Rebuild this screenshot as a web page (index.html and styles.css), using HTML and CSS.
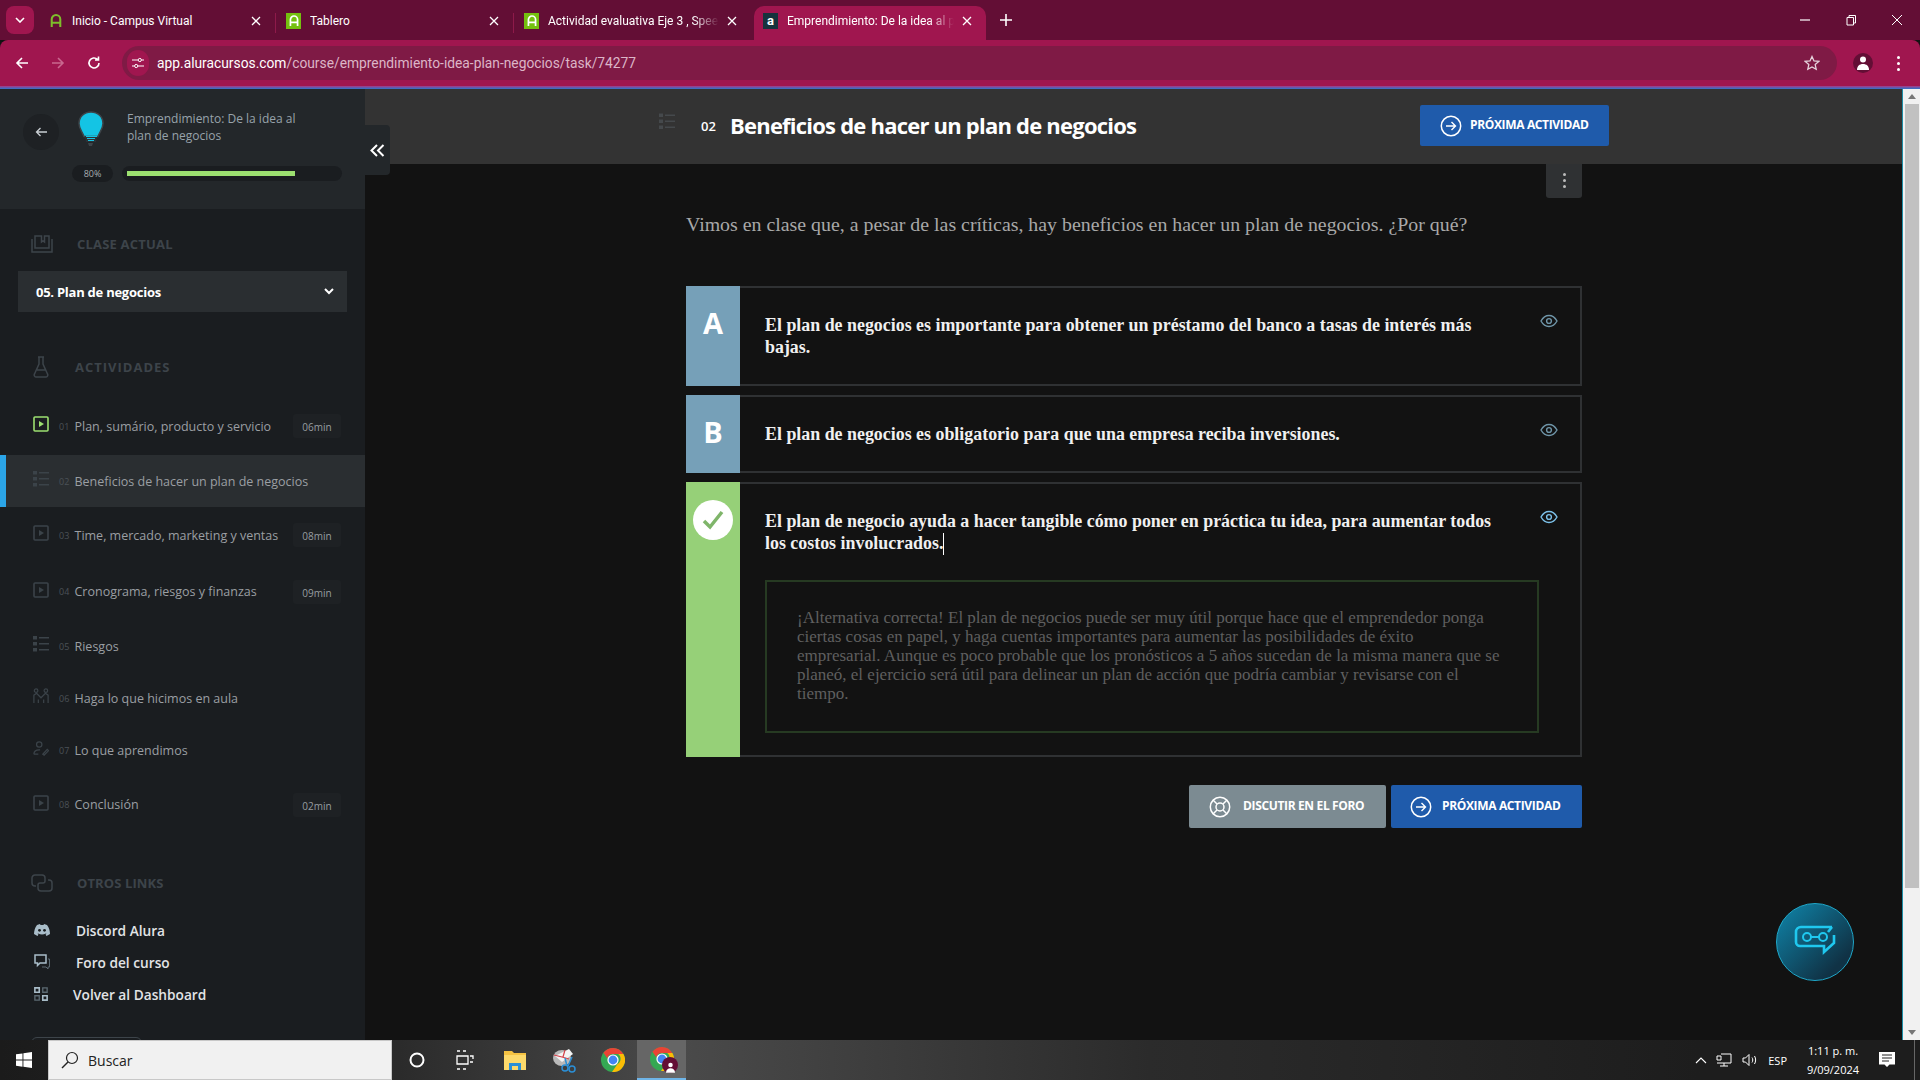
FILE: index.html
```html
<!DOCTYPE html>
<html lang="es">

<head>
    <meta charset="UTF-8">
    <title>Emprendimiento: De la idea al plan de negocios</title>
    <link rel="stylesheet" href="styles.css">
</head>

<body>
    <svg class="defs" width="0" height="0">
        <symbol id="i-play" viewBox="0 0 16 16">
            <rect x="1" y="1" width="14" height="14" rx="1" fill="none" stroke="currentColor" stroke-width="1.6" />
            <path d="M6 5l5 3-5 3z" fill="currentColor" />
        </symbol>
        <symbol id="i-list" viewBox="0 0 16 16">
            <path d="M0 0h4v3.5H0zM0 6h4v3.5H0zM0 12h4v3.5H0zM6 1h10v1.5H6zM6 7h10v1.5H6zM6 13h10v1.5H6z" fill="currentColor" />
        </symbol>
        <symbol id="i-next" viewBox="0 0 22 22">
            <circle cx="11" cy="11" r="9.7" fill="none" stroke="#fff" stroke-width="1.5" />
            <path d="M6 11h9.5M11.5 7l4 4-4 4" fill="none" stroke="#fff" stroke-width="1.4" />
        </symbol>
        <symbol id="i-eye" viewBox="0 0 18 14">
            <path d="M1 7c2-3.6 5-5.5 8-5.500S15 3.400 17 7c-2 3.600-5 5.500-8 5.500S3 10.600 1 7z" fill="none" stroke="currentColor" stroke-width="1.4" />
            <circle cx="9" cy="7" r="2.400" fill="none" stroke="currentColor" stroke-width="1.4" />
        </symbol>
        <symbol id="i-alura" viewBox="0 0 14 16">
            <path d="M2 15V6a5 5 0 0 1 10 0v9M2 10h10" fill="none" stroke="currentColor" stroke-width="2.400" />
        </symbol>
        <symbol id="i-x" viewBox="0 0 10 10">
            <path d="M1 1l8 8M9 1l-8 8" fill="none" stroke="currentColor" stroke-width="1.300" />
        </symbol>
        <symbol id="i-chrome" viewBox="0 0 24 24">
            <circle cx="12" cy="12" r="12" fill="#34a853" />
            <path d="M12 0a12 12 0 0 1 10.400 6H12a6 6 0 0 0-5.700 4.200L2.400 4.800A12 12 0 0 1 12 0z" fill="#ea4335" />
            <path d="M22.400 6A12 12 0 0 1 11 24l5.500-8a6 6 0 0 0 .7-10z" fill="#fbbc05" />
            <circle cx="12" cy="12" r="5.600" fill="#fff" />
            <circle cx="12" cy="12" r="4.400" fill="#4285f4" />
        </symbol>
    </svg>

    <div class="tabstrip">
        <div class="tab-menu">
            <svg width="10" height="6" viewBox="0 0 10 6">
                <path d="M1 1l4 4 4-4" fill="none" stroke="#fff" stroke-width="1.600" />
            </svg>
        </div>
        <div class="tab tab-first">
            <svg class="tab-icon alura-line" width="12" height="16"><use href="#i-alura" /></svg>
            <span class="tab-title">Inicio - Campus Virtual</span>
            <svg class="tab-close" width="10" height="10"><use href="#i-x" /></svg>
        </div>
        <div class="tab tab-sep">
            <div class="tab-favicon"><svg width="10" height="12"><use href="#i-alura" /></svg></div>
            <span class="tab-title">Tablero</span>
            <svg class="tab-close" width="10" height="10"><use href="#i-x" /></svg>
        </div>
        <div class="tab tab-sep">
            <div class="tab-favicon"><svg width="10" height="12"><use href="#i-alura" /></svg></div>
            <span class="tab-title tab-fade">Actividad evaluativa Eje 3 , Spee</span>
            <svg class="tab-close" width="10" height="10"><use href="#i-x" /></svg>
        </div>
        <div class="tab tab-active">
            <div class="tab-favicon tab-favicon-dark">a</div>
            <span class="tab-title tab-fade">Emprendimiento: De la idea al p</span>
            <svg class="tab-close" width="10" height="10"><use href="#i-x" /></svg>
        </div>
        <svg class="new-tab" width="12" height="12" viewBox="0 0 12 12">
            <path d="M6 0v12M0 6h12" stroke="#fff" stroke-width="1.600" />
        </svg>
        <div class="win-controls">
            <svg width="12" height="12" viewBox="0 0 12 12"><path d="M1 6h10" stroke="#fff" stroke-width="1.200" /></svg>
            <svg width="12" height="12" viewBox="0 0 12 12"><path d="M2 3.500h6.500V11H2zM4 3.500V1.500h6.500V9H8.500" fill="none" stroke="#fff" /></svg>
            <svg width="12" height="12" viewBox="0 0 12 12"><path d="M1 1l10 10M11 1L1 11" stroke="#fff" /></svg>
        </div>
    </div>

    <div class="toolbar">
        <svg class="nav-btn" width="14" height="14" viewBox="0 0 14 14">
            <path d="M13 7H2M7 2L2 7l5 5" fill="none" stroke="#fff" stroke-width="1.600" />
        </svg>
        <svg class="nav-btn nav-off" width="14" height="14" viewBox="0 0 14 14">
            <path d="M1 7h11M7 2l5 5-5 5" fill="none" stroke="currentColor" stroke-width="1.600" />
        </svg>
        <svg class="nav-btn" width="14" height="14" viewBox="0 0 14 14">
            <path d="M12 7a5 5 0 1 1-1.500-3.600M11.500 .5v3.500H8" fill="none" stroke="#fff" stroke-width="1.600" />
        </svg>
        <div class="omnibox">
            <div class="site-info">
                <svg width="12" height="12" viewBox="0 0 12 12">
                    <path d="M0 3h6M9.500 3H12M0 9h2.500M6 9h6" stroke="#fff" stroke-width="1.200" />
                    <circle cx="7.800" cy="3" r="1.600" fill="none" stroke="#fff" />
                    <circle cx="4.200" cy="9" r="1.600" fill="none" stroke="#fff" />
                </svg>
            </div>
            <span class="url"><span class="url-host">app.aluracursos.com</span>/course/emprendimiento-idea-plan-negocios/task/74277</span>
            <svg class="star" width="16" height="16" viewBox="0 0 16 16">
                <path d="M8 1.500l2 4.400 4.800.5-3.600 3.200 1 4.700L8 11.900l-4.200 2.400 1-4.700L1.200 6.400 6 5.900z" fill="none" stroke="#e6d3dc" stroke-width="1.300" />
            </svg>
        </div>
        <div class="profile">
            <svg width="12" height="14" viewBox="0 0 12 14">
                <circle cx="6" cy="3.500" r="3" fill="#fff" />
                <path d="M0 14c0-4 2.500-6 6-6s6 2 6 6z" fill="#fff" />
            </svg>
        </div>
        <div class="chrome-menu"><i></i><i></i><i></i></div>
    </div>
    <div class="load-line"></div>

    <div class="page">
        <aside class="sidebar">
            <div class="course-head">
                <div class="course-top">
                    <div class="back-btn">
                        <svg width="12" height="10" viewBox="0 0 12 10">
                            <path d="M12 5H1.500M5.500 1l-4 4 4 4" fill="none" stroke="#c9cfd3" stroke-width="1.300" />
                        </svg>
                    </div>
                    <svg class="bulb" width="26" height="36" viewBox="0 0 26 36">
                        <path d="M13 1C6 1 1 6 1 12.500c0 5 3 7.500 5 13h14c2-5.500 5-8 5-13C25 6 20 1 13 1z" fill="#14c4e4" stroke="#3d4449" stroke-width="1.500" />
                        <path d="M7 25h12l-1 6H8z" fill="#2c3236" />
                        <path d="M8 25.500h11M9 27.500h8M10 29.500h6" stroke="#14c4e4" stroke-width="1.100" />
                        <path d="M10 32h5l-1 3h-3z" fill="#3d4449" />
                    </svg>
                    <div class="course-name">Emprendimiento: De la idea al plan de negocios</div>
                </div>
                <div class="course-progress">
                    <span class="progress-pill">80%</span>
                    <div class="progress-track">
                        <div class="progress-fill" style="width: 168px"></div>
                    </div>
                </div>
            </div>

            <div class="side-title title-class">
                <svg width="22" height="18" viewBox="0 0 22 18">
                    <path d="M4 1h6.500v6l1.500-1 1.500 1V1H18v12H4zM1 4v13h20V4" fill="none" stroke="currentColor" stroke-width="1.500" />
                </svg>
                <span>CLASE ACTUAL</span>
            </div>
            <div class="class-select">
                <span>05. Plan de negocios</span>
                <svg width="10" height="7" viewBox="0 0 10 7">
                    <path d="M1 1l4 4 4-4" fill="none" stroke="#fff" stroke-width="2" />
                </svg>
            </div>

            <div class="side-title title-act">
                <svg width="16" height="22" viewBox="0 0 16 22">
                    <path d="M5 1h6M6 1v7L1.500 18a2 2 0 0 0 2 3h9a2 2 0 0 0 2-3L10 8V1M4 14h8" fill="none" stroke="currentColor" stroke-width="1.500" />
                </svg>
                <span>ACTIVIDADES</span>
            </div>

            <ul class="activities">
                <li class="activity timed first">
                    <svg class="act-icon act-done" width="16" height="16"><use href="#i-play" /></svg>
                    <span class="act-num">01</span>
                    <span class="act-name">Plan, sumário, producto y servicio</span>
                    <span class="act-time">06min</span>
                </li>
                <li class="activity current">
                    <svg class="act-icon" width="16" height="16"><use href="#i-list" /></svg>
                    <span class="act-num">02</span>
                    <span class="act-name">Beneficios de hacer un plan de negocios</span>
                </li>
                <li class="activity timed">
                    <svg class="act-icon" width="16" height="16"><use href="#i-play" /></svg>
                    <span class="act-num">03</span>
                    <span class="act-name">Time, mercado, marketing y ventas</span>
                    <span class="act-time">08min</span>
                </li>
                <li class="activity timed">
                    <svg class="act-icon" width="16" height="16"><use href="#i-play" /></svg>
                    <span class="act-num">04</span>
                    <span class="act-name">Cronograma, riesgos y finanzas</span>
                    <span class="act-time">09min</span>
                </li>
                <li class="activity">
                    <svg class="act-icon" width="16" height="16"><use href="#i-list" /></svg>
                    <span class="act-num">05</span>
                    <span class="act-name">Riesgos</span>
                </li>
                <li class="activity">
                    <svg class="act-icon" width="18" height="18" viewBox="0 0 18 18">
                        <circle cx="3.500" cy="3" r="2" fill="none" stroke="currentColor" stroke-width="1.400" />
                        <circle cx="14.500" cy="3" r="2" fill="none" stroke="currentColor" stroke-width="1.400" />
                        <path d="M1 17V8l3-2 5 5 5-5 3 2v9M6 17v-4M12 17v-4" fill="none" stroke="currentColor" stroke-width="1.400" />
                    </svg>
                    <span class="act-num">06</span>
                    <span class="act-name">Haga lo que hicimos en aula</span>
                </li>
                <li class="activity">
                    <svg class="act-icon" width="18" height="16" viewBox="0 0 18 16">
                        <circle cx="7" cy="4" r="3" fill="none" stroke="currentColor" stroke-width="1.400" />
                        <path d="M1 15c0-3 2-5 6-5h1M1 15h5M11 15l5-5.500 1.500 1.500-5 5z" fill="none" stroke="currentColor" stroke-width="1.400" />
                    </svg>
                    <span class="act-num">07</span>
                    <span class="act-name">Lo que aprendimos</span>
                </li>
                <li class="activity timed">
                    <svg class="act-icon" width="16" height="16"><use href="#i-play" /></svg>
                    <span class="act-num">08</span>
                    <span class="act-name">Conclusión</span>
                    <span class="act-time">02min</span>
                </li>
            </ul>

            <div class="side-title title-links">
                <svg width="22" height="18" viewBox="0 0 22 18">
                    <path d="M5 12H4a3 3 0 0 1-3-3V4a3 3 0 0 1 3-3h7a3 3 0 0 1 3 3v3a2 2 0 0 1-2 2H9a2 2 0 0 0-2 2v3a3 3 0 0 0 3 3h8a3 3 0 0 0 3-3V9a3 3 0 0 0-3-3h-1" fill="none" stroke="currentColor" stroke-width="1.500" />
                </svg>
                <span>OTROS LINKS</span>
            </div>
            <div class="side-links">
                <a class="side-link">
                    <svg width="16" height="12" viewBox="0 0 16 12">
                        <path d="M3 1l3-1 .5 1h3L10 0l3 1c2 2.500 3 6 3 9l-3.500 2-1-1.500 1-.5-.5-.5c-3 1.300-5 1.300-8 0l-.5.5 1 .5-1 1.500L0 10c0-3 1-6.500 3-9z" fill="#a9bdc9" />
                        <circle cx="5.500" cy="6.300" r="1.400" fill="#1a1d20" />
                        <circle cx="10.500" cy="6.300" r="1.400" fill="#1a1d20" />
                    </svg>
                    <span>Discord Alura</span>
                </a>
                <a class="side-link">
                    <svg width="16" height="16" viewBox="0 0 16 16">
                        <path d="M1 1h11v8H6l-2.500 2.500V9H1z" fill="none" stroke="#a9bdc9" stroke-width="1.500" />
                        <path d="M14 5h1.500v8H14v2l-2-2H8" fill="none" stroke="#5c6a72" />
                    </svg>
                    <span>Foro del curso</span>
                </a>
                <a class="side-link link-tight">
                    <svg width="14" height="14" viewBox="0 0 16 16">
                        <path d="M1 1h5v5H1zM10 10h5v5h-5z" fill="none" stroke="#a9bdc9" stroke-width="1.800" />
                        <path d="M10 1h5v5h-5zM1 10h5v5H1z" fill="none" stroke="#5c6a72" stroke-width="1.500" />
                    </svg>
                    <span>Volver al Dashboard</span>
                </a>
            </div>
            <div class="side-outline"></div>
        </aside>

        <main class="content">
            <header class="task-head">
                <svg class="head-list" width="16" height="17"><use href="#i-list" /></svg>
                <span class="task-num">02</span>
                <h1 class="task-title">Beneficios de hacer un plan de negocios</h1>
                <a class="btn btn-next head-next">
                    <svg width="22" height="22"><use href="#i-next" /></svg>
                    <span>PRÓXIMA ACTIVIDAD</span>
                </a>
            </header>

            <section class="task-body">
                <div class="more-btn"><i></i><i></i><i></i></div>
                <p class="question">Vimos en clase que, a pesar de las críticas, hay beneficios en hacer un plan de negocios. ¿Por qué?</p>

                <div class="answer">
                    <div class="answer-mark">A</div>
                    <div class="answer-main">
                        <p class="answer-text">El plan de negocios es importante para obtener un préstamo del banco a tasas de interés más bajas.</p>
                        <svg class="eye" width="18" height="14"><use href="#i-eye" /></svg>
                    </div>
                </div>
                <div class="answer">
                    <div class="answer-mark">B</div>
                    <div class="answer-main">
                        <p class="answer-text">El plan de negocios es obligatorio para que una empresa reciba inversiones.</p>
                        <svg class="eye" width="18" height="14"><use href="#i-eye" /></svg>
                    </div>
                </div>
                <div class="answer answer-right">
                    <div class="answer-mark">
                        <div class="check-circle">
                            <svg width="22" height="20" viewBox="0 0 22 20">
                                <path d="M2 11l6 6L20 2" fill="none" stroke="#7fb56a" stroke-width="3.500" />
                            </svg>
                        </div>
                    </div>
                    <div class="answer-main">
                        <p class="answer-text">El plan de negocio ayuda a hacer tangible cómo poner en práctica tu idea, para aumentar todos los costos involucrados.<span class="caret"></span></p>
                        <svg class="eye" width="18" height="14"><use href="#i-eye" /></svg>
                        <div class="opinion">¡Alternativa correcta! El plan de negocios puede ser muy útil porque hace que el emprendedor ponga ciertas cosas en papel, y haga cuentas importantes para aumentar las posibilidades de éxito<br>empresarial. Aunque es poco probable que los pronósticos a 5 años sucedan de la misma manera que se planeó, el ejercicio será útil para delinear un plan de acción que podría cambiar y revisarse con el tiempo.</div>
                    </div>
                </div>

                <div class="task-actions">
                    <a class="btn btn-forum">
                        <svg width="22" height="22" viewBox="0 0 22 22">
                            <circle cx="11" cy="11" r="9.700" fill="none" stroke="#fff" stroke-width="1.500" />
                            <circle cx="11" cy="11" r="4" fill="none" stroke="#fff" stroke-width="1.500" />
                            <path d="M4 4l4 4M18 4l-4 4M4 18l4-4M18 18l-4-4" stroke="#fff" stroke-width="1.500" />
                        </svg>
                        <span>DISCUTIR EN EL FORO</span>
                    </a>
                    <a class="btn btn-next">
                        <svg width="22" height="22"><use href="#i-next" /></svg>
                        <span>PRÓXIMA ACTIVIDAD</span>
                    </a>
                </div>
            </section>
        </main>

        <div class="scrollbar">
            <div class="arrow-up"></div>
            <div class="thumb"></div>
            <div class="arrow-down"></div>
        </div>

        <div class="collapse-btn">
            <svg width="15" height="13" viewBox="0 0 15 13">
                <path d="M7 1L1.500 6.500 7 12M13.500 1L8 6.500l5.500 5.500" fill="none" stroke="#fff" stroke-width="2" />
            </svg>
        </div>
        <div class="bot-btn">
            <svg width="44" height="36" viewBox="0 0 44 36">
                <path d="M39 3H8a5 5 0 0 0-5 5v10a4 4 0 0 0 4 4h24v6l10-9V11M39 3l-4 5" fill="none" stroke="#1fc8ef" stroke-width="2.600" />
                <circle cx="14" cy="13" r="4" fill="none" stroke="#1fc8ef" stroke-width="2" />
                <circle cx="30" cy="13" r="4" fill="none" stroke="#1fc8ef" stroke-width="2" />
                <path d="M18 13h8" stroke="#1fc8ef" stroke-width="2" />
            </svg>
        </div>
    </div>

    <footer class="taskbar">
        <svg class="win-logo" width="16" height="16" viewBox="0 0 16 16">
            <path d="M0 2.300l6.500-.9v6.200H0zM7.400 1.300L16 0v7.600H7.400zM0 8.500h6.500v6.200L0 13.800zM7.400 8.500H16V16l-8.600-1.300z" fill="#fff" />
        </svg>
        <div class="search-box">
            <svg width="18" height="18" viewBox="0 0 18 18">
                <circle cx="11" cy="7" r="5.500" fill="none" stroke="#222" stroke-width="1.200" />
                <path d="M7 11l-6 6" stroke="#222" stroke-width="1.400" />
            </svg>
            <span>Buscar</span>
        </div>
        <div class="task-apps">
            <div class="task-app">
                <svg width="16" height="16" viewBox="0 0 16 16"><circle cx="8" cy="8" r="6.500" fill="none" stroke="#fff" stroke-width="2" /></svg>
            </div>
            <div class="task-app">
                <svg class="view-icon" width="18" height="20" viewBox="0 0 18 20">
                    <path d="M1 6h11v8H1zM1 1h3M7 1h3M1 19h3M7 19h3M14 6h3v3M14 12h3" fill="none" stroke="#fff" stroke-width="1.300" />
                </svg>
            </div>
            <div class="task-app">
                <svg width="22" height="22" viewBox="0 0 22 22">
                    <path d="M0 2h8l2 2h12v17H0z" fill="#f5c242" />
                    <path d="M0 6h22v15H0z" fill="#fcd96b" />
                    <path d="M5 14h12v7h-3v-4H8v4H5z" fill="#2b8fd6" />
                </svg>
            </div>
            <div class="task-app">
                <svg width="24" height="26" viewBox="0 0 24 26">
                    <ellipse cx="10" cy="11" rx="9" ry="8" fill="#b9b9b9" />
                    <path d="M3 9l14-7 4 5-11 8z" fill="#f4f4f4" />
                    <path d="M2 8l8 2M13 3l-2 7M10 10l7 2" stroke="#d4414a" stroke-width="1.200" />
                    <circle cx="13" cy="21" r="3" fill="none" stroke="#2b8fd6" stroke-width="1.500" />
                    <circle cx="20" cy="22" r="3" fill="none" stroke="#2b8fd6" stroke-width="1.500" />
                    <path d="M13 11l2 8M20 10l-4 9" stroke="#2b8fd6" stroke-width="1.500" />
                </svg>
            </div>
            <div class="task-app">
                <svg width="24" height="24"><use href="#i-chrome" /></svg>
            </div>
            <div class="task-app task-app-on">
                <svg width="24" height="24"><use href="#i-chrome" /></svg>
                <div class="app-badge">
                    <svg width="9" height="11" viewBox="0 0 12 14">
                        <circle cx="6" cy="3.500" r="3" fill="#fff" />
                        <path d="M0 14c0-4 2.500-6 6-6s6 2 6 6z" fill="#fff" />
                    </svg>
                </div>
            </div>
        </div>
        <div class="tray">
            <svg class="tray-up" width="12" height="7" viewBox="0 0 12 7"><path d="M1 6l5-5 5 5" fill="none" stroke="#fff" stroke-width="1.100" /></svg>
            <svg width="16" height="14" viewBox="0 0 16 14"><path d="M5 1h10v9H1M8 10v3M4 13h8M1 3h4v4H1z" fill="none" stroke="#fff" /></svg>
            <svg width="16" height="14" viewBox="0 0 16 14"><path d="M1 5h2.500L7 1.500v11L3.500 9H1zM10 4.500c1 1.500 1 3.500 0 5M12.500 3c1.500 2.500 1.500 5.500 0 8" fill="none" stroke="#fff" /></svg>
            <span class="tray-lang">ESP</span>
            <div class="tray-clock">
                <span>1:11 p. m.</span>
                <span>9/09/2024</span>
            </div>
            <svg class="tray-note" width="16" height="16" viewBox="0 0 16 16">
                <path d="M0 0h16v12.500h-5.500L8 15l-2.500-2.500H0z" fill="#fff" />
                <path d="M3 3h10M3 6h10M3 9h7" stroke="#222" />
            </svg>
            <div class="show-desktop"></div>
        </div>
    </footer>
</body>

</html>
```

FILE: styles.css
```css
* {
    box-sizing: border-box;
}

html,
body {
    margin: 0;
    height: 100%;
}

body {
    display: flex;
    flex-direction: column;
    width: 1920px;
    height: 1080px;
    overflow: hidden;
    font-family: "Open Sans", "Liberation Sans", sans-serif;
    background-color: #121212;
}

p,
h1,
ul {
    margin: 0;
    padding: 0;
}

.defs {
    position: absolute;
}

/* browser chrome */
.tabstrip {
    display: flex;
    align-items: flex-end;
    height: 40px;
    flex-shrink: 0;
    padding-left: 6px;
    background-color: #630e35;
}

.tab-menu {
    display: flex;
    justify-content: center;
    align-items: center;
    width: 28px;
    height: 28px;
    margin: 0 0 6px 0;
    border-radius: 8px;
    background-color: #a0164f;
}

.tab {
    position: relative;
    display: flex;
    align-items: center;
    width: 238px;
    height: 34px;
    padding: 0 14px 5px 11px;
    color: #fff;
    font-family: Roboto, "Liberation Sans", sans-serif;
    font-size: 12px;
}

.tab-first {
    width: 241px;
    padding-left: 16px;
}

.tab-sep::before {
    content: "";
    position: absolute;
    left: 0;
    top: 7px;
    width: 1px;
    height: 20px;
    background-color: #8e1a4a;
}

.tab-active {
    width: 232px;
    margin-left: 3px;
    padding-left: 9px;
    border-radius: 10px 10px 0 0;
    background-color: #a0164f;
}

.tab-icon {
    flex-shrink: 0;
    margin-right: 10px;
}

.alura-line {
    color: #7ebd2b;
}

.tab-favicon {
    display: flex;
    justify-content: center;
    align-items: center;
    flex-shrink: 0;
    width: 15px;
    height: 16px;
    margin-right: 9px;
    background-color: #74c00f;
    color: #fff;
}

.tab-favicon-dark {
    background-color: #15333d;
    font-size: 13px;
    font-weight: bold;
}

.tab-title {
    flex: 1;
    overflow: hidden;
    white-space: nowrap;
}

.tab-fade {
    -webkit-mask-image: linear-gradient(to right, #000 85%, transparent);
    mask-image: linear-gradient(to right, #000 85%, transparent);
}

.tab-close {
    flex-shrink: 0;
    margin-left: 8px;
    color: #fff;
}

.new-tab {
    margin: 0 0 14px 14px;
}

.win-controls {
    display: flex;
    gap: 34px;
    margin: 0 17px 14px auto;
}

.toolbar {
    display: flex;
    align-items: center;
    height: 46px;
    flex-shrink: 0;
    padding-left: 15px;
    border-radius: 8px 8px 0 0;
    background-color: #a0164f;
}

.nav-btn {
    margin-right: 22px;
}

.nav-off {
    color: #c9688f;
}

.omnibox {
    display: flex;
    align-items: center;
    width: 1715px;
    height: 34px;
    margin-left: -1px;
    padding-left: 5px;
    border-radius: 17px;
    background-color: #7f1a45;
    color: #dcb5c7;
    font-family: Roboto, "Liberation Sans", sans-serif;
    font-size: 13.8px;
}

.site-info {
    display: flex;
    justify-content: center;
    align-items: center;
    width: 22px;
    height: 26px;
    margin-right: 8px;
    border-radius: 13px;
    background-color: #a0164f;
}

.url-host {
    color: #fff;
}

.star {
    margin-left: auto;
    margin-right: 17px;
}

.profile {
    display: flex;
    justify-content: center;
    align-items: center;
    width: 20px;
    height: 20px;
    margin-left: 16px;
    border-radius: 50%;
    background-color: #630e35;
}

.chrome-menu {
    display: flex;
    flex-direction: column;
    gap: 3px;
    margin-left: 24px;
}

.chrome-menu i {
    width: 3px;
    height: 3px;
    border-radius: 50%;
    background-color: #fff;
}

.load-line {
    height: 3px;
    flex-shrink: 0;
    background: linear-gradient(#a83a84, #2a74cc);
}

/* page */
.page {
    position: relative;
    display: flex;
    flex: 1;
    min-height: 0;
}

.sidebar {
    position: relative;
    width: 365px;
    flex-shrink: 0;
    overflow: hidden;
    background-color: #1a1d20;
}

.course-head {
    height: 120px;
    padding: 25px 0 0 23px;
    background-color: #23272a;
}

.course-top {
    display: flex;
    align-items: flex-start;
    height: 51px;
}

.back-btn {
    display: flex;
    justify-content: center;
    align-items: center;
    width: 36px;
    height: 36px;
    border-radius: 50%;
    background-color: #1e2124;
}

.bulb {
    margin: -3px 0 0 19px;
}

.course-name {
    width: 190px;
    margin: -4px 0 0 23px;
    color: #98a3ab;
    font-size: 12px;
    line-height: 17px;
}

.course-progress {
    display: flex;
    align-items: center;
    margin-left: 49px;
}

.progress-pill {
    width: 41px;
    height: 17px;
    border-radius: 9px;
    background-color: #1a1d20;
    color: #a8adb0;
    font-size: 9px;
    line-height: 17px;
    text-align: center;
}

.progress-track {
    width: 220px;
    height: 15px;
    margin-left: 9px;
    padding: 5px;
    border-radius: 8px;
    background-color: #1a1d20;
}

.progress-fill {
    height: 5px;
    background-color: #9ce070;
}

.side-title {
    display: flex;
    align-items: center;
    color: #3d444a;
    font-size: 13px;
    font-weight: bold;
    letter-spacing: 1px;
}

.title-class {
    height: 22px;
    margin-top: 24px;
    padding-left: 31px;
    letter-spacing: 0.2px;
}

.title-class span {
    margin-left: 24px;
}

.class-select {
    display: flex;
    justify-content: space-between;
    align-items: center;
    width: 329px;
    height: 41px;
    margin: 16px 0 0 18px;
    padding: 0 13px 0 18px;
    background-color: #2a2e31;
    color: #fff;
    font-size: 13px;
    font-weight: 700;
    letter-spacing: -0.25px;
}

.title-act {
    height: 24px;
    margin-top: 43px;
    padding-left: 33px;
}

.title-act span {
    margin-left: 26px;
}

.activities {
    margin-top: 18px;
    list-style: none;
}

.activity {
    display: flex;
    align-items: center;
    height: 52px;
    padding: 0 24px 0 33px;
    color: #9b9fa3;
    font-size: 12.5px;
}

.timed {
    height: 57px;
}

.first {
    height: 58px;
}

.current + .timed {
    height: 56px;
}

.current {
    padding-left: 27px;
    border-left: 6px solid #2ba5e8;
    background-color: #2a2e31;
}

.act-icon {
    flex-shrink: 0;
    margin: -4px 0 0 0;
    width: 16px;
    color: #3b4349;
}

.act-done {
    color: #9ce070;
}

.act-num {
    flex-shrink: 0;
    width: 15.5px;
    margin-left: 10px;
    color: #4b5157;
    font-size: 9px;
}

.act-name {
    flex: 1;
    white-space: nowrap;
}

.act-time {
    width: 48px;
    height: 24px;
    border-radius: 3px;
    background-color: #1e2124;
    color: #989da1;
    font-size: 10px;
    line-height: 26px;
    text-align: center;
}

.title-links {
    height: 22px;
    margin-top: 39px;
    padding-left: 31px;
    letter-spacing: 0.1px;
}

.title-links span {
    margin-left: 24px;
}

.side-links {
    display: flex;
    flex-direction: column;
    gap: 10px;
    margin-top: 25px;
    padding-left: 34px;
}

.side-link {
    display: flex;
    align-items: center;
    height: 22px;
    color: #e2e4e6;
    font-size: 13.7px;
    font-weight: 600;
}

.side-link span {
    margin-left: 26px;
}

.link-tight span {
    margin-left: 25px;
}

.side-outline {
    width: 111px;
    height: 20px;
    margin: 32px 0 0 31px;
    border: 1px solid #3d444a;
    border-radius: 6px;
}

.collapse-btn {
    position: absolute;
    left: 365px;
    top: 36px;
    display: flex;
    justify-content: center;
    align-items: center;
    width: 25px;
    height: 50px;
    border-radius: 0 4px 4px 0;
    background-color: #23272a;
}

/* main column */
.content {
    flex: 1;
    min-width: 0;
}

.task-head {
    display: flex;
    align-items: center;
    height: 75px;
    padding: 0 0 2px 294px;
    background-color: #333;
}

.head-list {
    margin: -9px 26px 0 0;
    color: #45494c;
}

.task-num {
    width: 29px;
    color: #fff;
    font-size: 13px;
    font-weight: 600;
}

.task-title {
    margin-top: -2px;
    color: #fff;
    font-size: 22px;
    font-weight: 700;
    letter-spacing: -0.78px;
    white-space: nowrap;
}

.btn {
    display: flex;
    align-items: center;
    border-radius: 2px;
    color: #fff;
    font-size: 12px;
    font-weight: 700;
    letter-spacing: -0.35px;
    white-space: nowrap;
}

.btn span {
    margin-top: -3px;
    margin-left: 8px;
}

.btn-next {
    background-color: #1f5bab;
}

.head-next {
    width: 189px;
    height: 41px;
    margin-left: auto;
    margin-right: 293px;
    padding-left: 20px;
}

.task-body {
    position: relative;
    padding: 0 320px 0 321px;
}

.more-btn {
    position: absolute;
    right: 320px;
    top: 0;
    display: flex;
    flex-direction: column;
    justify-content: center;
    align-items: center;
    gap: 3px;
    width: 36px;
    height: 34px;
    padding-bottom: 2px;
    border-radius: 0 0 3px 3px;
    background-color: #2f3133;
}

.more-btn i {
    width: 3px;
    height: 3px;
    border-radius: 50%;
    background-color: #bbb;
}

.question {
    padding: 48px 0 50px;
    color: #a8a8a8;
    font-family: "Liberation Serif", serif;
    font-size: 19.87px;
    line-height: 24px;
    white-space: nowrap;
}

.answer {
    display: flex;
    width: 896px;
    margin-bottom: 9px;
    border: 2px solid #2f3133;
    border-left: 0;
}

.answer-mark {
    display: flex;
    justify-content: center;
    flex-shrink: 0;
    width: 54px;
    margin: -2px 0;
    padding-top: 17px;
    background-color: #76a0b8;
    color: #fff;
    font-size: 29px;
    font-weight: 700;
    line-height: 40px;
}

.answer-main {
    position: relative;
    flex: 1;
    padding: 26px 24px 26px 25px;
}

.answer-text {
    width: 736px;
    color: #f0f0f0;
    font-family: "Liberation Serif", serif;
    font-size: 17.9px;
    font-weight: 700;
    line-height: 22px;
}

.eye {
    position: absolute;
    right: 22px;
    top: 26px;
    color: #6f95a8;
}

.answer-right {
    margin-bottom: 0;
}

.answer-right .answer-mark {
    padding-top: 18px;
    background-color: #96d078;
}

.answer-right .answer-main {
    padding-bottom: 22px;
}

.answer-right .eye {
    color: #7cc0e8;
}

.check-circle {
    display: flex;
    justify-content: center;
    align-items: center;
    width: 40px;
    height: 40px;
    border-radius: 50%;
    background-color: #fff;
}

.caret {
    display: inline-block;
    width: 1px;
    height: 22px;
    vertical-align: -6px;
    background-color: #fff;
}

.opinion {
    width: 774px;
    height: 153px;
    margin-top: 25px;
    padding: 26px 30px 0 30px;
    border: 2px solid #263a22;
    color: #5f5f5f;
    font-family: "Liberation Serif", serif;
    font-size: 17px;
    line-height: 19px;
}

.task-actions {
    display: flex;
    justify-content: flex-end;
    gap: 5px;
    width: 896px;
    margin-top: 28px;
}

.task-actions .btn {
    height: 43px;
}

.btn-forum {
    width: 197px;
    padding-left: 20px;
    background-color: #7c8b92;
}

.btn-forum span {
    margin-left: 12px;
}

.task-actions .btn-next {
    width: 191px;
    padding-left: 19px;
}

.task-actions .btn-next span {
    margin-left: 10px;
}

.scrollbar {
    display: flex;
    flex-direction: column;
    align-items: center;
    width: 18px;
    flex-shrink: 0;
    border-left: 1px solid #1d8fa8;
    background-color: #f1f1f1;
}

.arrow-up,
.arrow-down {
    width: 0;
    height: 0;
    border-left: 4px solid transparent;
    border-right: 4px solid transparent;
}

.arrow-up {
    margin-top: 5px;
    border-bottom: 5px solid #777;
}

.thumb {
    width: 14px;
    height: 784px;
    margin-top: 5px;
    background-color: #c1c1c1;
}

.arrow-down {
    margin-top: auto;
    margin-bottom: 5px;
    border-top: 5px solid #777;
}

.bot-btn {
    position: absolute;
    left: 1776px;
    top: 814px;
    display: flex;
    justify-content: center;
    align-items: center;
    width: 78px;
    height: 78px;
    border: 1px solid #1fa7c9;
    border-radius: 50%;
    background: linear-gradient(135deg, #0f86ab, #103245 80%);
}

/* windows taskbar */
.taskbar {
    display: flex;
    align-items: center;
    height: 40px;
    flex-shrink: 0;
    background: linear-gradient(to right, #1b1b1b, #2b2b2b 400px, #4a4a4a 680px, #2b2b2b 1150px, #1d1d1d 1700px);
}

.win-logo {
    margin: 0 16px;
}

.search-box {
    display: flex;
    align-items: center;
    width: 344px;
    height: 40px;
    padding-left: 12px;
    border: 1px solid #c8c8c8;
    background-color: #f1f1f1;
    color: #222;
    font-family: "Open Sans", sans-serif;
    font-size: 14px;
}

.search-box span {
    margin-left: 9px;
}

.task-apps {
    display: flex;
}

.task-app {
    position: relative;
    display: flex;
    justify-content: center;
    align-items: center;
    width: 49px;
    height: 40px;
}

.view-icon {
    margin-left: -2px;
}

.task-app-on {
    border-bottom: 2px solid #6fb5e8;
    background-color: #666;
}

.app-badge {
    position: absolute;
    left: 25px;
    top: 17px;
    display: flex;
    justify-content: center;
    align-items: flex-end;
    width: 16px;
    height: 16px;
    border-radius: 50%;
    background-color: #630e35;
}

.tray {
    display: flex;
    align-items: center;
    height: 40px;
    margin-left: auto;
    color: #fff;
    font-family: "Open Sans", sans-serif;
}

.tray svg {
    margin-right: 10px;
}

.tray svg.tray-up {
    margin-right: 9px;
}

.tray-lang {
    font-size: 11px;
}

.tray-clock {
    display: flex;
    flex-direction: column;
    align-items: center;
    width: 80px;
    margin: 0 6px 0 6px;
    font-size: 11px;
    line-height: 19px;
}

.tray svg.tray-note {
    margin: 0 19px 0 0;
}

.show-desktop {
    width: 1px;
    height: 40px;
    margin-right: 5px;
    background-color: #666;
}
```
